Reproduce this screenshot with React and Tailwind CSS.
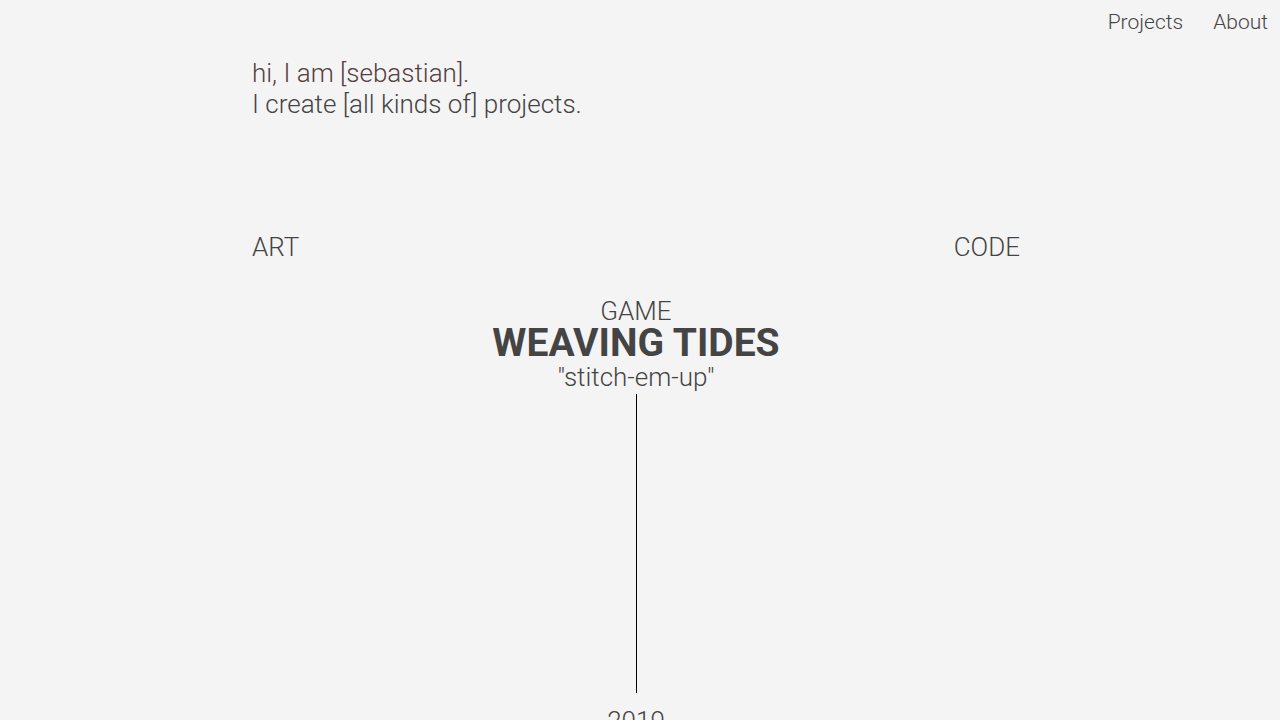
import React from "react"

const font = { fontFamily: "Roboto, 'Liberation Sans', sans-serif" }

function Nav() {
  return (
    <nav className="flex h-[44px] items-center justify-end gap-[30px] pt-[2px] pr-3 text-[21px] font-light text-[#444]">
      <a href="#">Projects</a>
      <a href="#">About</a>
    </nav>
  )
}

function Intro() {
  return (
    <div className="mt-[14px] text-[26px] font-light leading-[31px]">
      <p className="text-[#553f3f]">hi, I am [sebastian].</p>
      <p className="text-[#444]">I create [all kinds of] projects.</p>
    </div>
  )
}

function Project({ kind, title, tagline, year }) {
  return (
    <div className="mt-[33px] flex flex-col items-center text-[#444]">
      <span className="text-[26px] font-light leading-[30px]">{kind}</span>
      <h2 className="text-[39px] font-bold leading-[34px]">{title}</h2>
      <span className="text-[26px] font-light leading-[34px]">{tagline}</span>
      <div className="h-[299px] w-px bg-black" />
      <span className="mt-[13px] text-[26px] font-light leading-[31px]">{year}</span>
    </div>
  )
}

export default function App() {
  return (
    <div className="min-h-screen overflow-hidden bg-[#f4f4f4]" style={font}>
      <Nav />
      <div className="pr-2">
        <main className="mx-auto w-[768px]">
          <Intro />
          <div className="mt-[112px] flex justify-between text-[26px] font-light leading-[31px] text-[#444]">
            <span>ART</span>
            <span>CODE</span>
          </div>
          <Project kind="GAME" title="WEAVING TIDES" tagline={'"stitch-em-up"'} year="2019" />
        </main>
      </div>
    </div>
  )
}
